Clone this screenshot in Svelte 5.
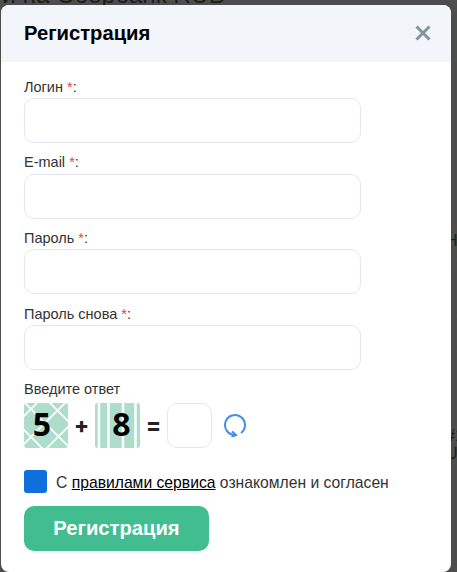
<script>
  const fields = ['Логин', 'E-mail', 'Пароль', 'Пароль снова'];
</script>

<div class="page">
  <div class="ghost-head">и на Сбербанк RUB</div>
  <div class="ghost-side one">Н</div>
  <div class="ghost-side two">#1<br />UE</div>
  <div class="ghost-line l1"></div>
  <div class="ghost-line l2"></div>
  <div class="ghost-line l3"></div>

  <section class="modal">
    <header class="head">
      <h2>Регистрация</h2>
      <svg class="close" viewBox="0 0 16 16" width="16" height="16" aria-label="Закрыть">
        <path d="M1.5 1.5 14.5 14.5M14.5 1.5 1.5 14.5" />
      </svg>
    </header>

    <form class="body">
      {#each fields as f}
        <div class="field">
          <span class="label">{f} <i>*</i>:</span>
          <input class="inp" type="text" />
        </div>
      {/each}

      <div class="captcha-wrap">
        <span class="label plain">Введите ответ</span>
        <div class="captcha">
          <div class="tile">
            <svg viewBox="0 0 44 45" width="44" height="45">
              <rect width="44" height="45" fill="#aeddcb" />
              <path d="M-3 -4 46 45M-3 44 44 -3M-2 15 15 -2M22 46 46 22M24 -2 46 20M-2 25 20 47" stroke="#fff" stroke-width="1.8" fill="none" />
            </svg>
            <b class="five">5</b>
          </div>
          <span class="op">+</span>
          <div class="tile">
            <svg viewBox="0 0 45 45" width="45" height="45">
              <rect width="45" height="45" fill="#aeddcb" />
              <path d="M4 0V45M13.500 0V45M28 0V45M40.500 0V45" stroke="#fff" stroke-width="2.500" fill="none" />
            </svg>
            <b class="eight">8</b>
          </div>
          <span class="op">=</span>
          <input class="inp small" type="text" />
          <svg class="refresh" viewBox="0 0 24 24" width="24" height="24">
            <path d="M18 20A10 10 0 1 0 12 22" />
            <path d="M9 18.500 13 22 8.500 24" />
          </svg>
        </div>
      </div>

      <div class="agree">
        <span class="check"></span>
        <span class="agree-text">С <a href="#rules">правилами сервиса</a> ознакомлен и согласен</span>
      </div>

      <button type="button" class="submit">Регистрация</button>
    </form>
  </section>
</div>

<style>
  :global(body) {
    margin: 0;
    background: #4d4d4d;
  }
  .page {
    position: relative;
    width: 457px;
    height: 572px;
    overflow: hidden;
    background: #4d4d4d;
    font-family: "Liberation Sans", Arial, sans-serif;
  }
  .ghost-head {
    position: absolute;
    left: 2px;
    top: -19px;
    font-size: 24.5px;
    line-height: 28px;
    color: #1c1c1c;
    white-space: nowrap;
  }
  .ghost-side {
    position: absolute;
    left: 446px;
    font-size: 16px;
    line-height: 18px;
    color: #1c1c1c;
  }
  .ghost-side.one { top: 232px; }
  .ghost-side.two { top: 427px; }
  .ghost-line {
    position: absolute;
    left: 451px;
    width: 6px;
    height: 1px;
    background: #5a4a4a;
  }
  .l1 { top: 260px; }
  .l2 { top: 315px; }
  .l3 { top: 351px; }
  .modal {
    position: absolute;
    left: 1px;
    top: 5px;
    width: 450px;
    height: 567px;
    background: #fff;
    border-radius: 8px;
    overflow: hidden;
  }
  .head {
    height: 57px;
    background: #f2f6fb;
    display: flex;
    align-items: center;
    justify-content: space-between;
    padding: 0 20px 2px 23px;
    box-sizing: border-box;
  }
  h2 {
    margin: 0;
    font-size: 20.2px;
    line-height: 24px;
    font-weight: 700;
    color: #000;
  }
  .close path {
    stroke: #83979b;
    stroke-width: 3;
    fill: none;
  }
  .body {
    display: flex;
    flex-direction: column;
    padding: 17px 23px 0;
  }
  .field {
    display: flex;
    flex-direction: column;
    height: 75.67px;
  }
  .label {
    font-size: 14.500px;
    line-height: 19px;
    height: 19px;
    color: #333;
    display: block;
    position: relative;
    top: -1.4px;
  }
  .label.plain {
    top: 0;
  }
  .label i {
    font-style: normal;
    color: #f04040;
  }
  .inp {
    box-sizing: border-box;
    width: 337px;
    height: 45px;
    border: 1px solid #e6e6f0;
    border-radius: 10px;
    background: #fff;
    padding: 0;
    margin: 0;
    outline: none;
  }
  .inp.small {
    width: 45px;
    flex: none;
  }
  .captcha-wrap {
    margin-top: -2px;
  }
  .captcha {
    display: flex;
    align-items: center;
    height: 45px;
    margin-top: 4px;
  }
  .tile {
    position: relative;
    display: flex;
    height: 45px;
    border-radius: 3px;
    overflow: hidden;
  }
  .tile b {
    position: absolute;
    inset: 0;
    display: flex;
    align-items: center;
    justify-content: center;
    padding-bottom: 3px;
    font-family: "Open Sans", "Noto Sans", sans-serif;
    font-size: 32px;
    font-weight: 700;
    color: #000;
  }
  .tile b.five { padding-right: 8px; }
  .tile b.eight { padding-left: 8px; }
  .op {
    width: 27px;
    text-align: center;
    font-family: "Inter", sans-serif;
    font-size: 22px;
    font-weight: 800;
    color: #222;
  }
  .refresh {
    margin-left: 11px;
  }
  .refresh path {
    stroke: #3d8fe8;
    stroke-width: 2;
    fill: none;
  }
  .agree {
    display: flex;
    align-items: center;
    gap: 9px;
    margin-top: 22px;
    height: 23px;
  }
  .check {
    width: 23px;
    height: 23px;
    border-radius: 3px;
    background: #0f70dc;
    flex: none;
  }
  .agree-text {
    font-size: 15.700px;
    color: #333;
    white-space: nowrap;
    position: relative;
    top: 2px;
  }
  .agree-text a {
    color: #000;
  }
  .submit {
    margin-top: 13px;
    width: 185px;
    height: 45px;
    border: 0;
    border-radius: 10px;
    background: #41bd90;
    color: #fff;
    font-family: inherit;
    font-size: 20.2px;
    font-weight: 700;
    padding: 0;
  }
</style>
